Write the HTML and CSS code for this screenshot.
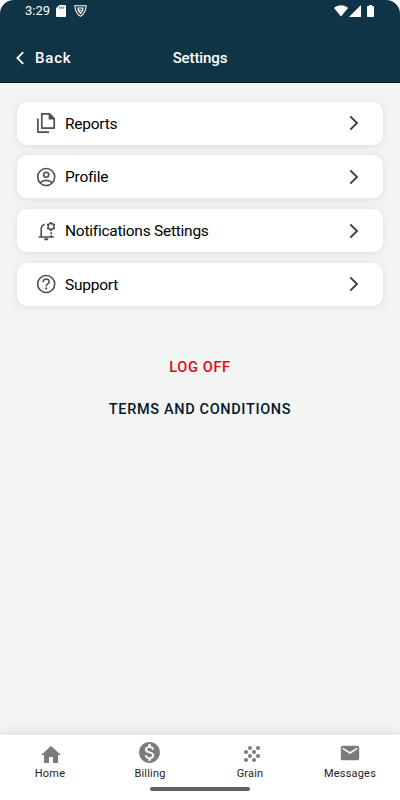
FILE: index.html
```html
<!DOCTYPE html>
<html lang="en">
<head>
    <meta charset="UTF-8">
    <meta name="viewport" content="width=device-width, initial-scale=1.0">
    <title>Settings</title>
    <link rel="stylesheet" href="styles.css">
</head>
<body>
    <div class="screen">
        <header class="header">
            <div class="status-bar">
                <span class="time">3:29</span>
                <svg class="sd-icon" width="10" height="12" viewBox="0 0 10 12"><path fill="#fff" d="M3.3 0H9a1 1 0 0 1 1 1v10a1 1 0 0 1-1 1H1a1 1 0 0 1-1-1V3.3z"/><path stroke="#0f3446" stroke-width=".8" d="M3.8 1.5v2.3M5.8 1.5v2.3M7.8 1.5v2.3"/></svg>
                <svg class="shield-icon" width="13" height="12" viewBox="0 0 13 12"><path fill="none" stroke="#fff" stroke-width="1.1" stroke-linejoin="round" d="M.8.8h11.4c-.2 4-2.200 8.200-5.700 10.600C3 9 1 4.800.8.800z"/><path fill="none" stroke="#fff" stroke-width="1.100" d="M3.300 3h6.400M4.200 5.200h4.600M6.500 8.400L4.200 5.500V3h4.600v2.500z"/></svg>
                <div class="status-right">
                    <svg class="wifi" width="14" height="12" viewBox="0 0 14 12"><path fill="#fff" d="M0 3C4-.7 10-.7 14 3L7 11.500z"/></svg>
                    <svg class="signal" width="12" height="12" viewBox="0 0 12 12"><path fill="#fff" d="M12 0v12H0z"/></svg>
                    <svg class="battery" width="7" height="12" viewBox="0 0 8 13" preserveAspectRatio="none"><path fill="#fff" d="M2.300 0h3.400v1.200H7a1 1 0 0 1 1 1V12a1 1 0 0 1-1 1H1a1 1 0 0 1-1-1V2.200a1 1 0 0 1 1-1h1.300z"/></svg>
                </div>
            </div>
            <div class="title-bar">
                <a class="back">
                    <svg width="8" height="14" viewBox="0 0 8 14"><path fill="none" stroke="#fff" stroke-width="1.800" d="M7.200 1.200L1.400 7l5.800 5.800"/></svg>
                    <span>Back</span>
                </a>
                <h1>Settings</h1>
            </div>
        </header>

        <main class="content">
            <div class="menu">
                <div class="card">
                    <svg class="card-icon" viewBox="0 0 20 22" width="20" height="22"><path fill="none" stroke="#4b5246" stroke-width="1.700" stroke-linejoin="round" d="M1.900 6.500v13.600h11.200M5.800 1.900h7.700l4.700 4.700v9.500H5.800z"/><path fill="#4b5246" d="M12.600 1.500v6h6z"/></svg>
                    <span>Reports</span>
                    <svg class="chevron" width="10" height="16" viewBox="0 0 10 16"><path d="M1.300 1.300L8 8l-6.700 6.700"/></svg>
                </div>
                <div class="card">
                    <svg class="card-icon" viewBox="0 0 20 22" width="20" height="22"><g fill="none" stroke="#4b5246" stroke-width="1.600"><circle cx="10.200" cy="11" r="8.500"/><circle cx="10.200" cy="8.700" r="2.500"/><path d="M4.200 16.800c3-3.200 9-3.200 12 0"/></g></svg>
                    <span>Profile</span>
                    <svg class="chevron" width="10" height="16" viewBox="0 0 10 16"><path d="M1.300 1.300L8 8l-6.700 6.700"/></svg>
                </div>
                <div class="card">
                    <svg class="card-icon" viewBox="0 0 20 22" width="20" height="22"><g fill="none" stroke="#4b5246"><path stroke-width="1.600" d="M2.600 17h15.200M5.200 17V9.500c0-2.600 1.100-4.400 3.400-5.200M15.200 12.200v1.700M15.200 15V17"/><circle cx="15" cy="6.400" r="2.900" stroke-width="1.400"/><path stroke-width="1.900" d="M15 1.900v1.700M15 9.200v1.700M11.100 4.100l1.500.9M17.400 7.800l1.500.9M11.100 8.700l1.500-.9M17.400 5l1.500-.9"/></g><path fill="#4b5246" d="M8 18.300h4.400a2.200 2.200 0 0 1-4.400 0z"/></svg>
                    <span>Notifications Settings</span>
                    <svg class="chevron" width="10" height="16" viewBox="0 0 10 16"><path d="M1.300 1.300L8 8l-6.700 6.700"/></svg>
                </div>
                <div class="card">
                    <svg class="card-icon" viewBox="0 0 20 22" width="20" height="22"><g fill="none" stroke="#4b5246" stroke-width="1.600"><circle cx="10.200" cy="11" r="8.500"/><path d="M7.200 8.900c.1-3.900 6-3.800 6-.2 0 2.200-3 2.300-3 4.600"/></g><circle cx="10.200" cy="15.400" r="1.100" fill="#4b5246"/></svg>
                    <span>Support</span>
                    <svg class="chevron" width="10" height="16" viewBox="0 0 10 16"><path d="M1.300 1.300L8 8l-6.700 6.700"/></svg>
                </div>
            </div>
            <a class="link log-off">LOG OFF</a>
            <a class="link terms">TERMS AND CONDITIONS</a>
        </main>

        <nav class="tabs">
            <div class="tab">
                <svg class="home" viewBox="0 0 24 24" width="24" height="24"><path d="M10 20v-6h4v6h5v-8h3L12 3 2 12h3v8z"/></svg>
                <span>Home</span>
            </div>
            <div class="tab">
                <svg class="billing" viewBox="0 0 24 24" width="25" height="25"><path d="M12 2C6.480 2 2 6.480 2 12s4.480 10 10 10 10-4.480 10-10S17.520 2 12 2zm1.410 16.090V20h-2.670v-1.930c-1.710-.36-3.160-1.460-3.270-3.400h1.960c.1 1.050.82 1.870 2.650 1.870 1.960 0 2.400-.98 2.400-1.590 0-.83-.44-1.610-2.670-2.140-2.480-.6-4.180-1.620-4.180-3.670 0-1.720 1.390-2.840 3.110-3.210V4h2.670v1.950c1.860.45 2.790 1.860 2.850 3.390H14.300c-.05-1.110-.64-1.870-2.220-1.870-1.500 0-2.400.68-2.400 1.640 0 .84.65 1.390 2.670 1.910s4.180 1.390 4.180 3.910c-.01 1.830-1.380 2.830-3.120 3.160z"/></svg>
                <span>Billing</span>
            </div>
            <div class="tab">
                <svg class="grain" viewBox="0 0 24 24" width="24" height="24"><circle cx="10" cy="6" r="2"/><circle cx="18" cy="6" r="2"/><circle cx="6" cy="10" r="2"/><circle cx="14" cy="10" r="2"/><circle cx="10" cy="14" r="2"/><circle cx="18" cy="14" r="2"/><circle cx="6" cy="18" r="2"/><circle cx="14" cy="18" r="2"/></svg>
                <span>Grain</span>
            </div>
            <div class="tab">
                <svg class="mail" viewBox="0 0 24 24" width="22" height="22"><path d="M20 4H4c-1.100 0-2 .9-2 2v12c0 1.100.9 2 2 2h16c1.100 0 2-.9 2-2V6c0-1.100-.9-2-2-2zm0 4l-8 5-8-5V6l8 5 8-5v2z"/></svg>
                <span>Messages</span>
            </div>
            <div class="home-bar"></div>
        </nav>
    </div>
</body>
</html>
```

FILE: styles.css
```css
* {
    box-sizing: border-box;
}

body {
    margin: 0;
    background: #fff;
    font-family: Roboto, sans-serif;
    color: #000;
}

.screen {
    display: flex;
    flex-direction: column;
    width: 400px;
    height: 800px;
    overflow: hidden;
    border-radius: 14px 14px 0 0;
    background: #f3f5f5;
}

/* Header */
.header {
    height: 83px;
    background: #0f3446;
    border-bottom: 1px solid #020c18;
    color: #fff;
}

.status-bar {
    display: flex;
    align-items: center;
    height: 22px;
    padding: 0 26px 0 25px;
}

.time {
    width: 31px;
    font-size: 13px;
    line-height: 22px;
}

.shield-icon {
    margin-left: 8px;
}

.status-right {
    display: flex;
    align-items: center;
    margin-left: auto;
}

.signal {
    margin-left: 1px;
}

.battery {
    margin-left: 6px;
}

.title-bar {
    display: grid;
    grid-template-columns: 1fr auto 1fr;
    align-items: center;
    height: 60px;
    padding: 11px 16px 0;
}

.back {
    display: flex;
    align-items: center;
    gap: 11px;
    font-size: 15px;
    font-weight: 500;
    letter-spacing: 0.8px;
}

h1 {
    margin: 0;
    font-size: 15px;
    font-weight: 500;
    letter-spacing: -0.1px;
}

/* Menu */
.content {
    display: flex;
    flex-direction: column;
    align-items: center;
    flex: 1;
    padding: 18.700px 17px 0;
}

.menu {
    display: flex;
    flex-direction: column;
    gap: 10.700px;
    width: 100%;
}

.card {
    display: flex;
    align-items: center;
    height: 43px;
    padding: 0 24px 0 19px;
    border-radius: 10px;
    background: #fff;
    box-shadow: 0 1px 8px rgba(0, 0, 0, 0.1);
    font-size: 15.500px;
    letter-spacing: -0.25px;
}

.card span {
    padding-top: 1px;
}

.card-icon {
    margin-right: 9px;
}

.chevron {
    margin-left: auto;
    fill: none;
    stroke: #35414f;
    stroke-width: 1.9;
}

.link {
    font-size: 14.500px;
    font-weight: 500;
    line-height: 20px;
    letter-spacing: 0.65px;
}

.log-off {
    margin-top: 52px;
    color: #e30613;
}

.terms {
    margin-top: 22px;
    color: #06172b;
}

/* Bottom tabs */
.tabs {
    position: relative;
    display: flex;
    height: 65px;
    background: #fff;
    box-shadow: 0 0 14px rgba(0, 0, 0, 0.13);
}

.tab {
    display: flex;
    flex-direction: column;
    align-items: center;
    justify-content: space-between;
    flex: 1;
    height: 46px;
    padding-top: 7px;
    color: #1c1c1c;
    font-size: 11px;
    line-height: 14px;
    letter-spacing: 0.2px;
}

.tab svg {
    fill: #7b7b7b;
}

.tab .home {
    margin: 1px 0 0 2px;
}

.tab .billing {
    margin: -2px 2px 0 0;
}

.tab .grain {
    margin-left: 4px;
}

.home-bar {
    position: absolute;
    left: 150px;
    bottom: 9px;
    width: 100px;
    height: 4px;
    border-radius: 2px;
    background: #626262;
}
```
